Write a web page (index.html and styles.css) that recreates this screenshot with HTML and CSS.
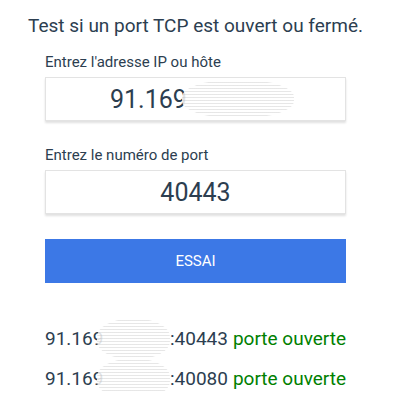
FILE: index.html
```html
<!DOCTYPE html>
<html lang="fr">
<head>
<meta charset="utf-8">
<link rel="stylesheet" href="styles.css">
</head>
<body>
<div class="page">
  <h1 class="title">Test si un port TCP est ouvert ou fermé.</h1>
  <form class="form">
    <label class="label">Entrez l'adresse IP ou hôte</label>
    <div class="field field-ip"><span class="val">91.169</span><span class="blur blur-ip"></span></div>
    <label class="label label-port">Entrez le numéro de port</label>
    <div class="field"><span class="val">40443</span></div>
    <div class="button">ESSAI</div>
  </form>
  <div class="results">
    <div class="row"><span class="ip">91.169</span><span class="blur blur-row"></span><span class="port">:40443</span><span class="ok">porte ouverte</span></div>
    <div class="row"><span class="ip">91.169</span><span class="blur blur-row"></span><span class="port">:40080</span><span class="ok">porte ouverte</span></div>
  </div>
</div>
</body>
</html>
```

FILE: styles.css
```css
* { box-sizing: border-box; }
body {
  margin: 0;
  background: #fff;
  font-family: Roboto, "Liberation Sans", sans-serif;
  color: #2c3e50;
}
.page {
  width: 401px;
  padding-top: 13px;
  display: flex;
  flex-direction: column;
  align-items: center;
}
.title {
  margin: 0 10px 0 0;
  font-size: 19px;
  font-weight: 400;
  line-height: 26px;
  white-space: nowrap;
}
.form {
  width: 301px;
  margin-left: -10px;
  margin-top: 14px;
  display: flex;
  flex-direction: column;
}
.label {
  font-size: 15px;
  line-height: 18px;
  height: 24px;
}
.label-port { margin-top: 25px; }
.field {
  height: 44px;
  border: 1px solid #e3e3e3;
  box-shadow: 0 2px 2px rgba(0,0,0,0.12);
  display: flex;
  align-items: center;
  justify-content: center;
  font-size: 25px;
  background: #fff;
}
.field-ip { justify-content: flex-start; padding-left: 64px; }
.val { position: relative; }
.blur {
  display: inline-block;
  position: relative;
  border-radius: 45%;
  background: repeating-linear-gradient(0deg, rgba(255,255,255,0.95) 0 2px, #e4e4e4 2px 3px);
  opacity: 0.9;
}
.blur-ip {
  width: 112px;
  height: 38px;
  margin-left: -5px;
}
.button {
  margin-top: 25px;
  height: 44px;
  background: #3c78e6;
  color: #fff;
  font-size: 15px;
  display: flex;
  align-items: center;
  justify-content: center;
}
.results {
  width: 301px;
  margin-left: -10px;
  margin-top: 44px;
  display: flex;
  flex-direction: column;
  gap: 16px;
}
.row {
  font-size: 19px;
  line-height: 24px;
  display: flex;
  align-items: center;
  white-space: nowrap;
}
.blur-row {
  width: 78px;
  height: 40px;
  margin: -8px 0 -8px -6px;
}
.ok { color: #008000; margin-left: 5px; }
```
